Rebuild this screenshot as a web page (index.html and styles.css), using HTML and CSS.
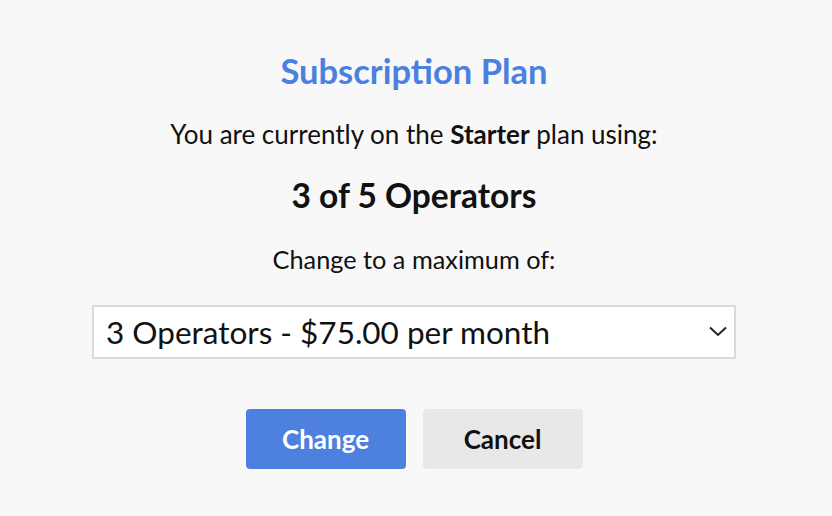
FILE: index.html
```html
<!DOCTYPE html>
<html lang="en">
<head>
    <meta charset="UTF-8">
    <meta name="viewport" content="width=device-width, initial-scale=1.0">
    <link rel="stylesheet" href="styles.css">
    <title>Subscription Plan</title>
</head>
<body>

    <form class="plan-form" id="planForm">
        <h1 class="title">Subscription Plan</h1>
        <p class="current">You are currently on the <strong>Starter</strong> plan using:</p>
        <p class="usage">3 of 5 Operators</p>
        <label for="operators" class="change-label">Change to a maximum of:</label>
        <div class="select-wrap">
            <select id="operators" name="operators">
                <option>3 Operators - $75.00 per month</option>
                <option>5 Operators - $125.00 per month</option>
                <option>10 Operators - $250.00 per month</option>
            </select>
            <svg class="chevron" width="18" height="11" viewBox="0 0 18 11">
                <path d="M1 1.5 L9 9 L17 1.5" fill="none" stroke="#222" stroke-width="2"/>
            </svg>
        </div>
        <div class="actions">
            <button type="submit" class="btn btn-primary">Change</button>
            <button type="button" class="btn btn-cancel">Cancel</button>
        </div>
    </form>

</body>
</html>
```

FILE: styles.css
```css
body {
    font-family: 'Lato', 'Liberation Sans', sans-serif;
    background-color: #f8f8f8;
    color: #111;
    margin: 0;
    padding: 0;
}

.plan-form {
    display: flex;
    flex-direction: column;
    align-items: center;
    padding: 51px 96px 0 92px;
}

.title {
    color: #4a80e0;
    font-size: 34.5px;
    font-weight: 700;
    margin: 0;
    line-height: 40px;
}

.current {
    font-size: 26px;
    margin: 28px 0 0;
    line-height: 30px;
}

.current strong {
    font-weight: 700;
}

.usage {
    font-size: 33.5px;
    font-weight: 700;
    margin: 26px 0 0;
    line-height: 40px;
}

.change-label {
    font-size: 25.3px;
    margin: 29px 0 0;
    line-height: 30px;
}

.select-wrap {
    position: relative;
    width: 100%;
    margin-top: 31px;
}

select {
    width: 100%;
    height: 54px;
    font-family: inherit;
    font-size: 31.5px;
    color: #111;
    background-color: #fff;
    border: 2px solid #dadada;
    border-radius: 0;
    padding: 0 12px;
    box-sizing: border-box;
    appearance: none;
    -webkit-appearance: none;
}

.chevron {
    position: absolute;
    right: 9px;
    top: 21px;
    pointer-events: none;
}

.actions {
    display: flex;
    gap: 17px;
    margin-top: 50px;
}

.btn {
    width: 160px;
    height: 60px;
    font-family: inherit;
    font-size: 26px;
    font-weight: 700;
    border: none;
    border-radius: 4px;
    cursor: pointer;
}

.btn-primary {
    background-color: #4e80e0;
    color: #fff;
}

.btn-cancel {
    background-color: #e8e8e8;
    color: #111;
}
```
